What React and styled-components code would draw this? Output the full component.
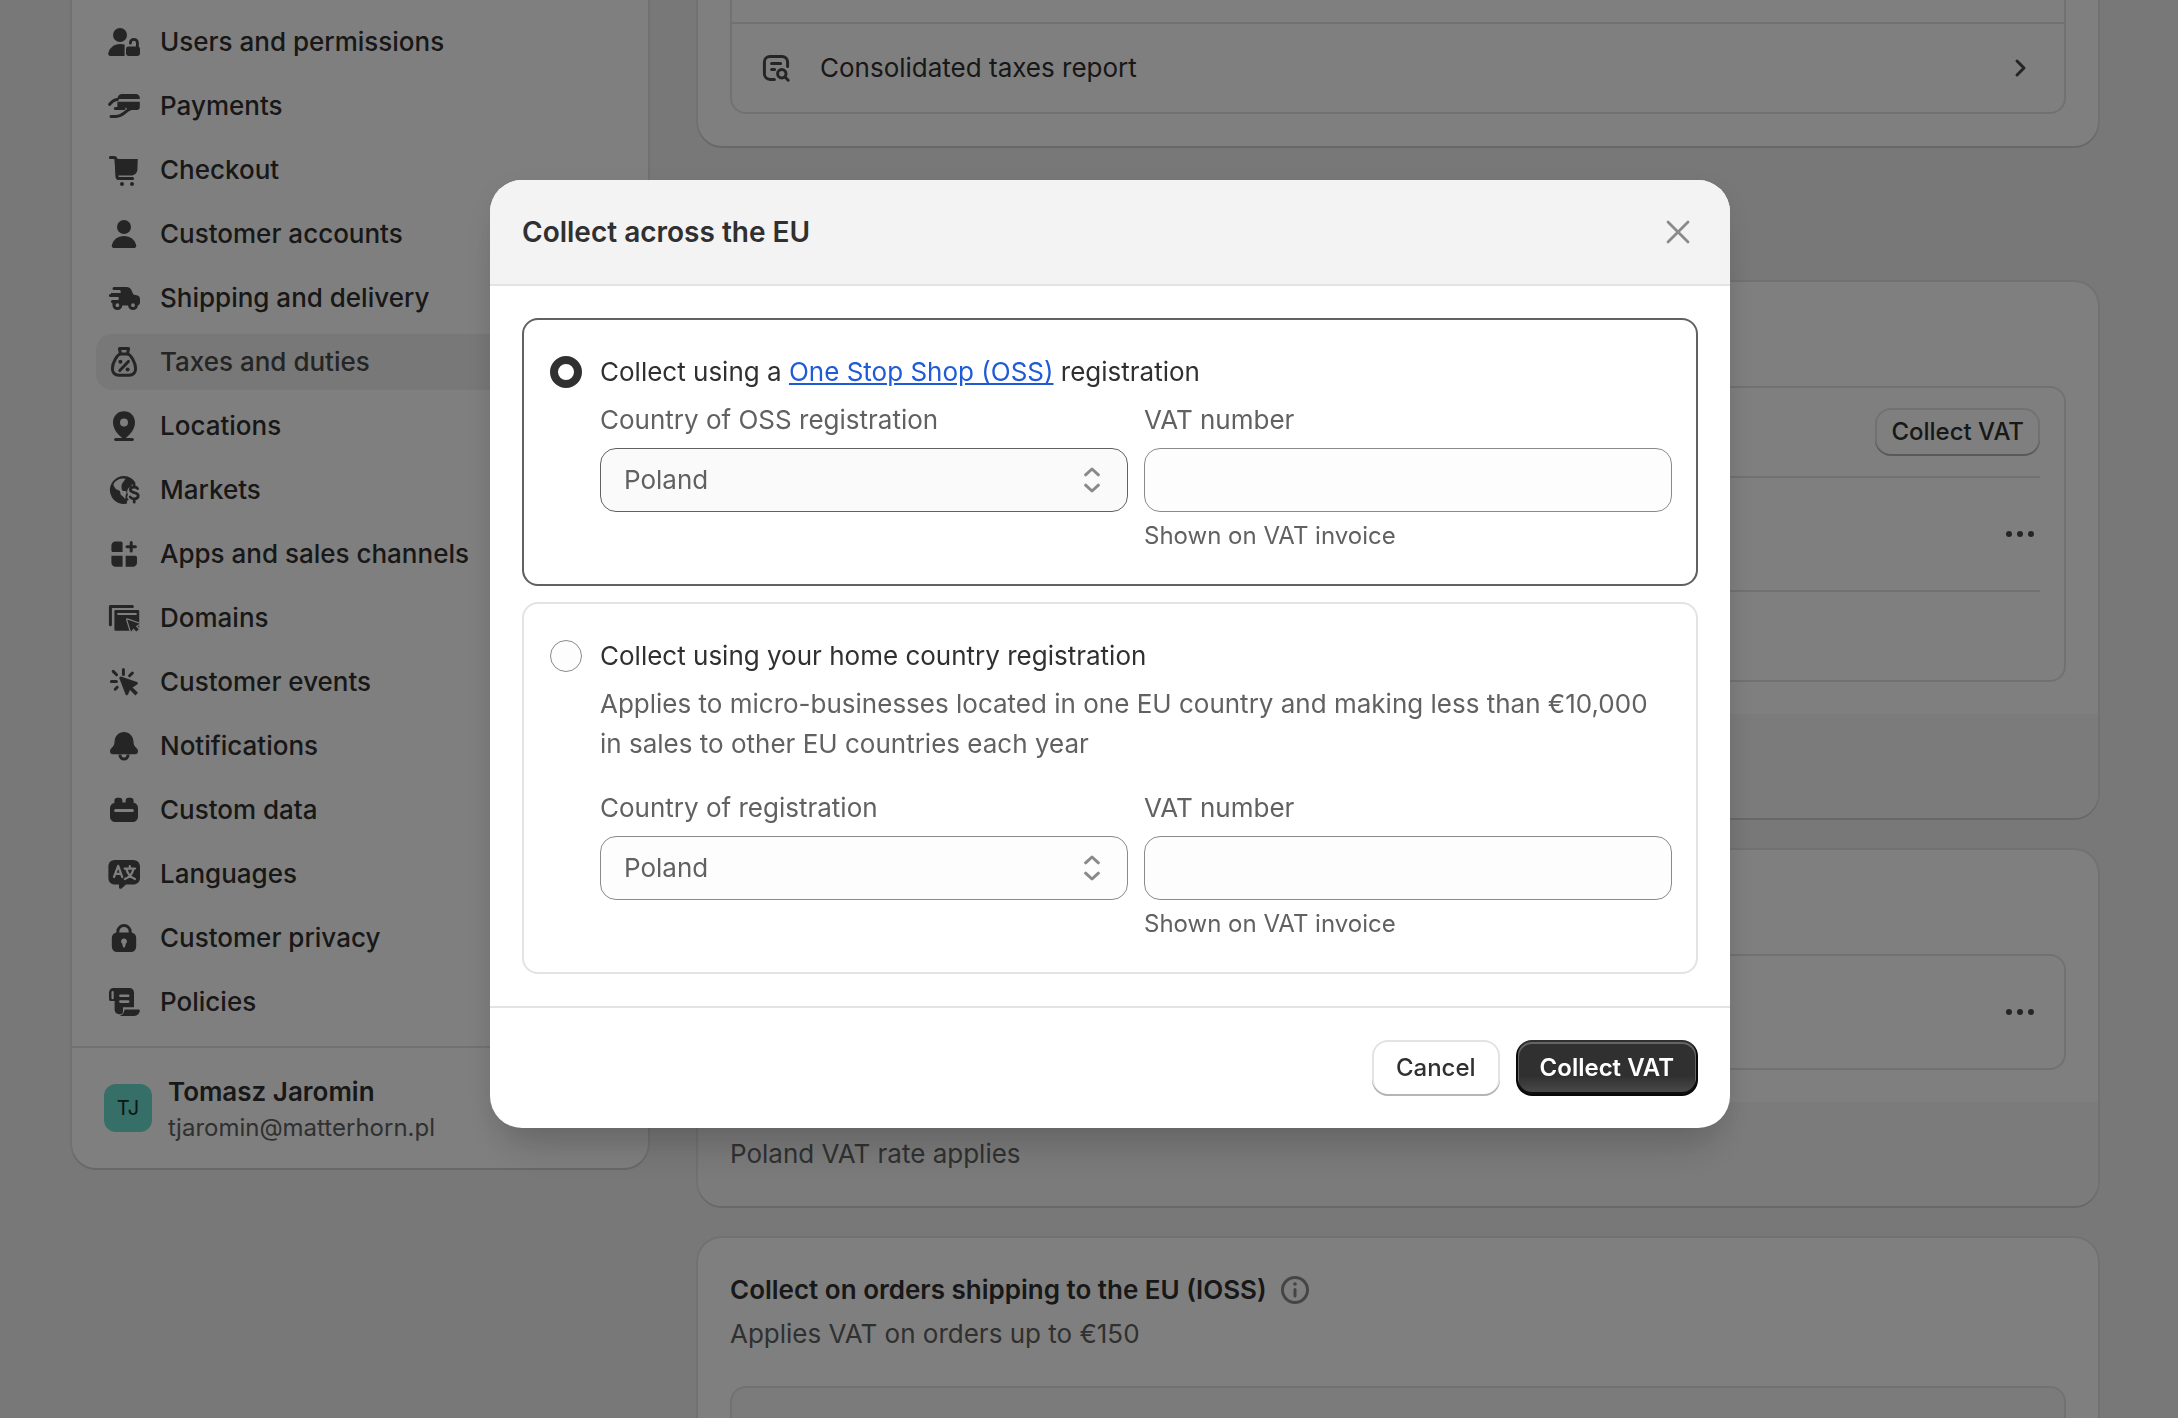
import React, { useState } from "react";
import styled, { createGlobalStyle } from "styled-components";

const GlobalStyle = createGlobalStyle`
  * {
    box-sizing: border-box;
  }
  body {
    margin: 0;
    overflow: hidden;
    background: #f1f1f1;
    color: #303030;
    font-family: Inter, "Liberation Sans", sans-serif;
    font-size: 26px;
    line-height: 40px;
    font-optical-sizing: none;
    -webkit-font-smoothing: antialiased;
  }
  button, input, select {
    font: inherit;
    color: inherit;
  }
  h2, h3, p {
    margin: 0;
  }
`;

const icons = {
  users: (
    <>
      <circle cx="8" cy="6.5" r="3.5" />
      <path d="M10.3 11.3V17H3.1c-.6 0-1-.5-1-1.1C2.5 13 5 11 8 11c.8 0 1.6.1 2.3.3z" />
      <rect x="11" y="12.2" width="7" height="4.8" rx="1.2" />
      <path
        d="M13.2 10.6v-.2a1.75 1.75 0 0 1 3.5 0v2.6"
        fill="none"
        stroke="currentColor"
        strokeWidth="1.4"
        strokeLinecap="round"
      />
    </>
  ),
  payments: (
    <>
      <path d="M6.7 6.5c0-1.4 1-2.5 2.3-2.5h7c1.1 0 1.9.9 1.9 2v.5z" />
      <path d="M6.7 7.9h11.2v2.6c0 .9-.6 1.5-1.4 1.5h-3.8l-1 .6c.3-1.2-.5-1.9-1.6-1.9H6.7z" />
      <g fill="none" stroke="currentColor" strokeWidth="1.5" strokeLinecap="round">
        <path d="M2.8 9.2C3.9 7.6 5 6.9 6.7 6.7" />
        <path d="M5.7 11.3h4.3" />
        <path d="M3.5 15.2h2.5c3.5 0 4.5-2.7 7-3.6" />
      </g>
    </>
  ),
  checkout: (
    <>
      <path d="M5.4 4.5h11.5l-.2 5.4c-.1 1.7-1.5 2.9-3.2 2.9H7l.2 1.4H6z" />
      <path
        d="M3.2 3.7h1.7c.7 0 1.1.4 1.1 1.1l.5 8.3c0 .7.5 1.2 1.2 1.2h6.6"
        fill="none"
        stroke="currentColor"
        strokeWidth="1.5"
        strokeLinecap="round"
      />
      <circle cx="9" cy="17" r="1" />
      <circle cx="14" cy="17" r="1" />
    </>
  ),
  person: (
    <>
      <circle cx="10" cy="6.5" r="3.5" />
      <path d="M3.9 15.7C4.5 12.9 6.9 11 10 11s5.5 1.9 6.1 4.7c.1.7-.4 1.3-1.1 1.3H5c-.7 0-1.2-.6-1.1-1.3z" />
    </>
  ),
  shipping: (
    <>
      <path d="M5 4.5h6.3c1 0 1.9.5 2.3 1.4l1.1 2.3 2.1.6c.7.2 1.2.9 1.2 1.7v1.8c0 .8-.5 1.4-1.3 1.4H5.5c-.9 0-1.4-.5-1.4-1.3h3.2V8.8H3.5V7.5h4.7V6H5a.75.75 0 0 1 0-1.5z" />
      <path
        d="M3.2 8.8h4.5M4.2 11.8h3"
        stroke="currentColor"
        strokeWidth="1.5"
        strokeLinecap="round"
      />
      <path d="M4 7.2h4.3" stroke="#fff" strokeWidth=".6" />
      <circle cx="6.7" cy="13.6" r="1.7" fill="#fff" stroke="currentColor" strokeWidth="1.5" />
      <circle cx="14.5" cy="13.6" r="1.7" fill="#fff" stroke="currentColor" strokeWidth="1.5" />
    </>
  ),
  taxes: (
    <>
      <g fill="none" stroke="currentColor" strokeWidth="1.5" strokeLinecap="round" strokeLinejoin="round">
        <path d="M8.3 5.9 7.7 3.3h4.6l-.6 2.6" />
        <path d="M8.3 6h3.4c1.5 0 4.1 4.3 4.1 7.3 0 2-1.2 3.3-3.2 3.3H7.4c-2 0-3.2-1.3-3.2-3.3C4.2 10.3 6.8 6 8.3 6z" />
        <path d="m12.2 9.7-4.3 4.6" />
      </g>
      <circle cx="8.2" cy="9.9" r="1" />
      <circle cx="11.8" cy="13.8" r="1" />
    </>
  ),
  pin: (
    <>
      <path
        fillRule="evenodd"
        d="M10 2.6c3.1 0 5.5 2.4 5.5 5.5 0 3.3-2.1 5.7-4.3 7.6-.7.6-1.7.6-2.4 0-2.2-1.9-4.3-4.3-4.3-7.6 0-3.1 2.4-5.5 5.5-5.5zm0 3.7a2 2 0 1 0 0 4 2 2 0 0 0 0-4z"
      />
      <path d="M5.8 16.7h8.4" stroke="currentColor" strokeWidth="1.5" strokeLinecap="round" />
    </>
  ),
  markets: (
    <>
      <path d="M10 3a7 7 0 1 0 1.6 13.8c-.4-.7-.1-1.7.8-2-1-.5-1-1.7-.4-2.4-.9-1.8-.2-3.5 1.6-4.1.1-.9.9-1.4 1.8-1.2l.4-.6A7 7 0 0 0 10 3z" />
      <path
        d="M4.7 7.1c1-1.7 2.5-2.6 4.4-2.8l1.7.1-1.7 2.4c-.5.8-.4 1.8-.2 2.9.2.6.8.9 1.5.8.9 0 1.1.8.7 1.5-.5.9-.2 1.5-.5 2.5-.8-.6-1-1.3-1.7-1.7-.9-.5-.6-1.5-1-2.3-.7-.8-1.7-.6-2.3-1.4-.4-.6-.7-1.2-.9-2z"
        fill="#fff"
      />
      <path
        d="M16.8 9.3c-.3-.5-.9-.8-1.7-.8-1.1 0-1.9.5-1.9 1.4 0 2 3.9.8 3.9 3 0 .9-.8 1.5-2 1.5-.9 0-1.6-.3-2-.9M15.1 7.5v1M15.1 14.5v1.6"
        fill="none"
        stroke="currentColor"
        strokeWidth="1.4"
        strokeLinecap="round"
      />
    </>
  ),
  apps: (
    <>
      <path d="M5.7 3.7h2.8c.4 0 .8.4.8.8V9H4.5c-.4 0-.8-.4-.8-.8V5.7c0-1.1.9-2 2-2z" />
      <path d="M3.7 10.9h5.6v5.5H5.7c-1.1 0-2-.9-2-2z" />
      <path d="M10.8 10.9h4.9c.4 0 .8.4.8.8v2.7c0 1.1-.9 2-2 2h-3.7z" />
      <path
        d="M13.6 4.3v4.2M11.5 6.4h4.2"
        stroke="currentColor"
        strokeWidth="1.5"
        strokeLinecap="round"
      />
    </>
  ),
  domains: (
    <>
      <path
        d="M3.2 13.4V4.2h11"
        fill="none"
        stroke="currentColor"
        strokeWidth="1.5"
        strokeLinecap="round"
        strokeLinejoin="round"
      />
      <rect x="5.2" y="6" width="12.4" height="10.4" rx=".6" />
      <path d="M6.7 8h9.6" stroke="#fff" strokeWidth="1" />
      <path
        d="m11.6 10.7 6.3 2.2-2 1.2 1.5 1.5-1.2 1.1-1.5-1.5-1.2 1.7z"
        stroke="#fff"
        strokeWidth="1.2"
        strokeLinejoin="round"
        paintOrder="stroke"
      />
    </>
  ),
  events: (
    <>
      <path d="M8.5 7.3 16.5 10c.6.2.6.9.1 1.2l-2.3 1.5 2.7 2.7-1.3 1.3-2.7-2.7-1 2.3c-.3.5-1 .5-1.2-.1L7.7 8.2c-.2-.5.3-1 .8-.9z" />
      <path
        d="M9.7 3.7v2.6M4.6 4.7l1.7 1.7M14.2 5.5l-1.4 1.4M3.7 9.8h2.5M5.6 13.6l1-1"
        stroke="currentColor"
        strokeWidth="1.5"
        strokeLinecap="round"
      />
    </>
  ),
  bell: (
    <>
      <path d="M10 3c2.6 0 4.6 2 4.7 4.6.1 1.7.4 2.4 1.5 3.4.6.6.8 1.1.8 1.7 0 .8-.6 1.4-1.4 1.4H4.4c-.8 0-1.4-.6-1.4-1.4 0-.6.2-1.1.8-1.7 1.1-1 1.4-1.7 1.5-3.4C5.4 5 7.4 3 10 3z" />
      <path d="M8 14.2v.3a2 2 0 0 0 4 0v-.3" fill="none" stroke="currentColor" strokeWidth="1.5" />
    </>
  ),
  data: (
    <>
      <path d="M5.2 6.5V5.3c0-.8.6-1.4 1.4-1.4h1.2c.8 0 1.4.6 1.4 1.4v1h1.6v-1c0-.8.6-1.4 1.4-1.4h1.2c.8 0 1.4.6 1.4 1.4v1.1c1.3.2 2.2 1.2 2.2 2.6v4.2c0 1.6-1.2 2.8-2.8 2.8H5.8C4.2 16 3 14.8 3 13.2V9.1c0-1.3.9-2.4 2.2-2.6z" />
      <path d="M5.8 10.3h8.4" stroke="#fff" strokeWidth="1.5" strokeLinecap="round" />
    </>
  ),
  languages: (
    <>
      <path d="M5.4 3h9.2C16.5 3 18 4.4 18 6.3v5.7c0 1.9-1.5 3.3-3.4 3.3H11l-2.2 1.9c-.5.4-1.3.1-1.3-.6v-1.3H5.4C3.5 15.3 2.2 13.9 2.2 12V6.3C2.2 4.4 3.5 3 5.4 3z" />
      <g fill="none" stroke="#fff" strokeWidth="1.1" strokeLinecap="round" strokeLinejoin="round">
        <path d="M5 11.5 7.1 5.9l2 5.6M5.7 9.9h2.7" />
        <path d="M10.3 7.3h5.2M12.9 6v1.3M14.7 7.5c-.5 2.4-2 4.2-4.3 5M11.2 7.5c.6 2.4 2 4.2 4.3 5" />
      </g>
    </>
  ),
  lock: (
    <>
      <path d="M6.9 8V6.8a3.1 3.1 0 0 1 6.2 0V8" fill="none" stroke="currentColor" strokeWidth="1.5" />
      <rect x="3.9" y="7.3" width="12.2" height="9.7" rx="2.6" />
      <path d="M10 10.2a1.5 1.5 0 0 1 .9 2.7l-.3 1.2a.6.6 0 0 1-1.2 0l-.3-1.2a1.5 1.5 0 0 1 .9-2.7z" fill="#fff" />
    </>
  ),
  policies: (
    <>
      <path d="M4.7 3h8c1.3 0 2.3 1 2.3 2.3v7.3H9.5v2c0 .9-.5 1.5-1.3 1.5h-.7c-1.2 0-2.2-.9-2.2-2.2V9.5H3.2a.7.7 0 0 1-.7-.7V5.2C2.5 4 3.5 3 4.7 3z" />
      <path d="M10.3 13.7h7c.4 0 .7.3.6.7-.2 1.5-1.3 2.6-2.8 2.6H7.8c1.5-.5 2.2-1.7 2.5-3.3z" />
      <path d="M4.3 5.1v3" stroke="#fff" strokeWidth="1.1" strokeLinecap="round" />
      <path d="M8.2 6.9h3.9M8.2 9.8h3.9" stroke="#fff" strokeWidth="1.3" strokeLinecap="round" />
    </>
  ),
  report: (
    <g fill="none" stroke="currentColor" strokeWidth="1.5" strokeLinecap="round">
      <path d="M9.2 15.7H7A2.8 2.8 0 0 1 4.2 12.9V7A2.8 2.8 0 0 1 7 4.2h6A2.8 2.8 0 0 1 15.8 7v2.2" />
      <path d="M7.8 7.8h4.5M7.8 10.7h1.5" />
      <circle cx="12.9" cy="12.9" r="2.1" />
      <path d="m14.6 14.6 1.5 1.5" />
    </g>
  ),
  chevron: (
    <path
      d="m8.5 6.5 3.5 3.5-3.5 3.5"
      fill="none"
      stroke="currentColor"
      strokeWidth="1.5"
      strokeLinecap="round"
      strokeLinejoin="round"
    />
  ),
  dots: (
    <>
      <circle cx="4.5" cy="10" r="1.5" />
      <circle cx="10" cy="10" r="1.5" />
      <circle cx="15.5" cy="10" r="1.5" />
    </>
  ),
  info: (
    <>
      <circle cx="10" cy="10" r="6.25" fill="none" stroke="currentColor" strokeWidth="1.5" />
      <path d="M10 9.7v3.3" stroke="currentColor" strokeWidth="1.5" strokeLinecap="round" />
      <circle cx="10" cy="7" r=".9" />
    </>
  ),
  close: (
    <path
      d="m5 5 10 10M15 5 5 15"
      stroke="currentColor"
      strokeWidth="1.4"
      strokeLinecap="round"
    />
  ),
  select: (
    <path
      d="M6.8 7.4 10 4.5l3.2 2.9M6.8 12.6l3.2 2.9 3.2-2.9"
      fill="none"
      stroke="currentColor"
      strokeWidth="1.5"
      strokeLinecap="round"
      strokeLinejoin="round"
    />
  ),
};

const navItems = [
  { icon: "users", label: "Users and permissions" },
  { icon: "payments", label: "Payments" },
  { icon: "checkout", label: "Checkout" },
  { icon: "person", label: "Customer accounts" },
  { icon: "shipping", label: "Shipping and delivery" },
  { icon: "taxes", label: "Taxes and duties" },
  { icon: "pin", label: "Locations" },
  { icon: "markets", label: "Markets" },
  { icon: "apps", label: "Apps and sales channels" },
  { icon: "domains", label: "Domains" },
  { icon: "events", label: "Customer events" },
  { icon: "bell", label: "Notifications" },
  { icon: "data", label: "Custom data" },
  { icon: "languages", label: "Languages" },
  { icon: "lock", label: "Customer privacy" },
  { icon: "policies", label: "Policies" },
];

const Icon = ({ name, tone }) => (
  <Svg viewBox="0 0 20 20" $tone={tone} aria-hidden="true">
    {icons[name]}
  </Svg>
);

const Sidebar = () => (
  <SidebarCard>
    <Nav>
      {navItems.map((item) => (
        <NavLink href="#" key={item.label} $active={item.icon === "taxes"}>
          <Icon name={item.icon} />
          {item.label}
        </NavLink>
      ))}
    </Nav>
    <Profile>
      <Avatar>TJ</Avatar>
      <div>
        <ProfileName>Tomasz Jaromin</ProfileName>
        <ProfileEmail>tjaromin@matterhorn.pl</ProfileEmail>
      </div>
    </Profile>
  </SidebarCard>
);

const MoreButton = () => (
  <IconButton aria-label="More actions">
    <Icon name="dots" />
  </IconButton>
);

const Settings = () => (
  <Main>
    <Card $flushTop>
      <Section $flushTop>
        <Box $flushTop>
          <ReportLink href="#">
            <Icon name="report" />
            <span>Consolidated taxes report</span>
            <Icon name="chevron" />
          </ReportLink>
        </Box>
      </Section>
    </Card>
    <Card $spaced>
      <Section>
        <CardHeader />
        <Box $padded>
          <Row>
            <SmallButton>Collect VAT</SmallButton>
          </Row>
          <Row $tall $divided>
            <MoreButton />
          </Row>
          <Row $divided />
        </Box>
      </Section>
      <CardFooter />
    </Card>
    <Card>
      <Section>
        <CardHeader />
        <Box $padded>
          <Row $tall>
            <MoreButton />
          </Row>
        </Box>
      </Section>
      <CardFooter>Poland VAT rate applies</CardFooter>
    </Card>
    <Card>
      <Section>
        <CardTitle>
          Collect on orders shipping to the EU (IOSS)
          <Icon name="info" tone="#8a8a8a" />
        </CardTitle>
        <CardText>Applies VAT on orders up to €150</CardText>
        <Box $padded $muted>
          <Row $tall />
        </Box>
      </Section>
    </Card>
  </Main>
);

const CountryFields = ({ id, label, active }) => (
  <Fields>
    <div>
      <Label htmlFor={`${id}-country`}>{label}</Label>
      <SelectWrap>
        <Select id={`${id}-country`} defaultValue="Poland" $active={active}>
          <option>Poland</option>
        </Select>
        <Icon name="select" tone="#8a8a8a" />
      </SelectWrap>
    </div>
    <div>
      <Label htmlFor={`${id}-vat`}>VAT number</Label>
      <Input id={`${id}-vat`} type="text" aria-describedby={`${id}-help`} />
      <Help id={`${id}-help`}>Shown on VAT invoice</Help>
    </div>
  </Fields>
);

const CollectDialog = () => {
  const [method, setMethod] = useState("oss");

  return (
    <Dialog role="dialog" aria-modal="true" aria-labelledby="dialog-title">
      <DialogHeader>
        <DialogTitle id="dialog-title">Collect across the EU</DialogTitle>
        <IconButton aria-label="Close">
          <Icon name="close" tone="#8a8a8a" />
        </IconButton>
      </DialogHeader>
      <DialogBody>
        <Option $selected={method === "oss"}>
          <Radio
            type="radio"
            name="method"
            id="oss"
            checked={method === "oss"}
            onChange={() => setMethod("oss")}
          />
          <div>
            <OptionLabel htmlFor="oss">
              Collect using a <Link href="#">One Stop Shop (OSS)</Link> registration
            </OptionLabel>
            <CountryFields id="oss" label="Country of OSS registration" active />
          </div>
        </Option>
        <Option $selected={method === "home"}>
          <Radio
            type="radio"
            name="method"
            id="home"
            checked={method === "home"}
            onChange={() => setMethod("home")}
          />
          <div>
            <OptionLabel htmlFor="home">
              Collect using your home country registration
            </OptionLabel>
            <OptionText>
              Applies to micro-businesses located in one EU country and making
              less than €10,000 in sales to other EU countries each year
            </OptionText>
            <CountryFields id="home" label="Country of registration" />
          </div>
        </Option>
      </DialogBody>
      <DialogFooter>
        <Button>Cancel</Button>
        <PrimaryButton>Collect VAT</PrimaryButton>
      </DialogFooter>
    </Dialog>
  );
};

export default function App() {
  return (
    <>
      <GlobalStyle />
      <Page>
        <Sidebar />
        <Settings />
      </Page>
      <Backdrop>
        <CollectDialog />
      </Backdrop>
    </>
  );
}

const Svg = styled.svg`
  display: block;
  flex: none;
  width: 40px;
  height: 40px;
  color: ${(p) => p.$tone || "#4a4a4a"};
  fill: currentColor;
`;

const Page = styled.div`
  display: flex;
  align-items: flex-start;
  gap: 50px;
  height: 100vh;
  padding: 0 80px 0 72px;
  overflow: hidden;
`;

const SidebarCard = styled.aside`
  flex: 0 0 576px;
  background: #fff;
  border-radius: 0 0 24px 24px;
  box-shadow: 0 2px 0 0 #d0d0d0, 0 0 0 2px #e3e3e3;
`;

const Nav = styled.nav`
  display: flex;
  flex-direction: column;
  gap: 8px;
  padding: 14px 24px 16px;
`;

const NavLink = styled.a`
  display: flex;
  align-items: center;
  gap: 16px;
  height: 56px;
  padding: 0 8px;
  border-radius: 16px;
  background: ${(p) => (p.$active ? "#f1f1f1" : "transparent")};
  color: ${(p) => (p.$active ? "#4a4a4a" : "#303030")};
  font-weight: 550;
  text-decoration: none;
`;

const Profile = styled.div`
  display: flex;
  align-items: flex-start;
  gap: 16px;
  padding: 26px 32px 22px;
  border-top: 2px solid #e3e3e3;

  > div {
    line-height: 36px;
  }
`;

const Avatar = styled.span`
  width: 48px;
  height: 48px;
  margin-top: 10px;
  border-radius: 12px;
  background: #6cdcd0;
  color: #10302c;
  font-size: 20px;
  line-height: 48px;
  text-align: center;
`;

const ProfileName = styled.div`
  font-weight: 600;
`;

const ProfileEmail = styled.div`
  color: #616161;
  font-size: 24px;
`;

const Main = styled.main`
  flex: 1;
  min-width: 0;
  display: flex;
  flex-direction: column;
  gap: 32px;
`;

const Card = styled.section`
  flex: none;
  margin-top: ${(p) => (p.$spaced ? "104px" : "0")};
  background: #fff;
  border-radius: ${(p) => (p.$flushTop ? "0 0 24px 24px" : "24px")};
  box-shadow: 0 2px 0 0 #d0d0d0, 0 0 0 2px #e3e3e3;
`;

const Section = styled.div`
  padding: ${(p) => (p.$flushTop ? "0 32px 32px" : "32px")};
`;

const CardHeader = styled.div`
  height: 40px;
  margin-bottom: 32px;
`;

const CardTitle = styled.h3`
  display: flex;
  align-items: center;
  gap: 8px;
  margin-bottom: 4px;
  font-size: 26px;
  font-weight: 600;
`;

const CardText = styled.p`
  margin-bottom: 32px;
  color: #616161;
`;

const CardFooter = styled.div`
  min-height: 104px;
  padding: 32px;
  border-radius: 0 0 24px 24px;
  background: #f7f7f7;
  color: #616161;
`;

const Box = styled.div`
  padding: ${(p) => (p.$padded ? "0 24px" : "0")};
  padding-top: ${(p) => (p.$flushTop ? "22px" : "0")};
  border: 2px solid #e3e3e3;
  border-top-width: ${(p) => (p.$flushTop ? "0" : "2px")};
  border-radius: ${(p) => (p.$flushTop ? "0 0 16px 16px" : "16px")};
  background: ${(p) => (p.$muted ? "#f7f7f7" : "#fff")};
`;

const Row = styled.div`
  box-sizing: content-box;
  display: flex;
  align-items: center;
  justify-content: flex-end;
  height: ${(p) => (p.$tall ? "112px" : "88px")};
  border-top: ${(p) => (p.$divided ? "2px solid #e3e3e3" : "0")};
`;

const ReportLink = styled.a`
  display: flex;
  align-items: center;
  gap: 24px;
  padding: 24px;
  border-top: 2px solid #e3e3e3;
  color: #303030;
  text-decoration: none;

  span {
    flex: 1;
  }
`;

const IconButton = styled.button`
  padding: 0;
  border: 0;
  background: none;
  cursor: pointer;
`;

const Button = styled.button`
  height: 56px;
  padding: 0 24px;
  border: 0;
  border-radius: 16px;
  background: #fff;
  box-shadow: inset 0 -2px 0 0 #b5b5b5, inset 0 0 0 2px #e3e3e3;
  font-size: 24px;
  font-weight: 550;
  cursor: pointer;
`;

const SmallButton = styled(Button)`
  height: 48px;
  padding: 0 16px;
`;

const PrimaryButton = styled(Button)`
  background: linear-gradient(180deg, rgba(48, 48, 48, 0) 64%, rgba(255, 255, 255, 0.15) 100%), #303030;
  box-shadow: inset 0 -2px 0 2px rgba(0, 0, 0, 0.8), inset 0 0 0 2px #303030,
    inset 0 1px 0 3px rgba(255, 255, 255, 0.25);
  color: #fff;
  font-weight: 600;
`;

const Backdrop = styled.div`
  position: fixed;
  inset: 0;
  display: flex;
  justify-content: center;
  align-items: flex-start;
  padding: 180px 0 0 42px;
  background: rgba(0, 0, 0, 0.5);
`;

const Dialog = styled.div`
  width: 100%;
  max-width: 1240px;
  overflow: hidden;
  border-radius: 32px;
  background: #fff;
  box-shadow: 0 32px 40px -16px rgba(26, 26, 26, 0.2), 0 8px 32px rgba(26, 26, 26, 0.08);
`;

const DialogHeader = styled.div`
  display: flex;
  align-items: center;
  justify-content: space-between;
  padding: 32px;
  border-bottom: 2px solid #e3e3e3;
  background: #f3f3f3;
`;

const DialogTitle = styled.h2`
  font-size: 28px;
  font-weight: 600;
`;

const DialogBody = styled.div`
  display: flex;
  flex-direction: column;
  gap: 16px;
  padding: 32px;
`;

const DialogFooter = styled.div`
  display: flex;
  justify-content: flex-end;
  gap: 16px;
  padding: 32px;
  border-top: 2px solid #e3e3e3;
`;

const Option = styled.div`
  display: grid;
  grid-template-columns: 32px 1fr;
  gap: 18px;
  padding: 32px 24px 28px 26px;
  border: 2px solid ${(p) => (p.$selected ? "#616161" : "#e3e3e3")};
  border-radius: 16px;
`;

const Radio = styled.input`
  appearance: none;
  width: 32px;
  height: 32px;
  margin: 4px 0;
  border: 1px solid #8a8a8a;
  border-radius: 50%;
  background: #fdfdfd;

  &:checked {
    border: 8px solid #303030;
    background: #fff;
  }
`;

const OptionLabel = styled.label`
  display: block;
`;

const Link = styled.a`
  color: #1f5bd6;
`;

const OptionText = styled.p`
  margin: 8px 0 24px;
  color: #616161;
`;

const Fields = styled.div`
  display: grid;
  grid-template-columns: 1fr 1fr;
  gap: 16px;
  margin-top: 8px;
  color: #616161;
`;

const Label = styled.label`
  display: block;
  margin-bottom: 8px;
`;

const Input = styled.input`
  display: block;
  width: 100%;
  height: 64px;
  padding: 0 24px;
  border: 1px solid #8a8a8a;
  border-radius: 16px;
  background: #fdfdfd;
`;

const SelectWrap = styled.div`
  position: relative;

  svg {
    position: absolute;
    top: 12px;
    right: 16px;
    pointer-events: none;
  }
`;

const Select = styled.select`
  appearance: none;
  display: block;
  width: 100%;
  height: 64px;
  padding: 0 64px 0 23px;
  border: 1px solid ${(p) => (p.$active ? "#616161" : "#8a8a8a")};
  border-radius: 16px;
  background: ${(p) => (p.$active ? "#fafafa" : "#fdfdfd")};
`;

const Help = styled.div`
  margin-top: 4px;
  font-size: 24px;
`;
